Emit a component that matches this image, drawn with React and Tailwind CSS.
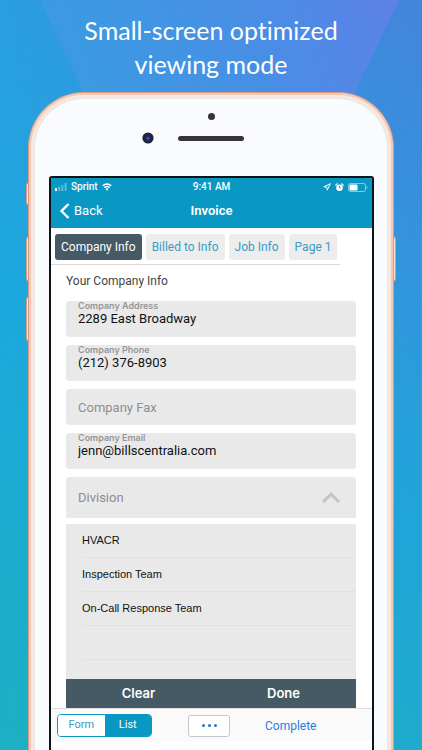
import React, { useState } from 'react';

const TABS = ['Company Info', 'Billed to Info', 'Job Info', 'Page 1'];
const DIVISIONS = ['HVACR', 'Inspection Team', 'On-Call Response Team'];

const Field = ({ id, label, type = 'text', defaultValue }) => (
    <div className="flex h-9 flex-col rounded-[3px] bg-[#e9e9e9] px-3">
        <label htmlFor={id} className="font-['Inter',sans-serif] text-[9px] leading-[10px] font-semibold text-[#969696]">{label}</label>
        <input
            id={id}
            type={type}
            defaultValue={defaultValue}
            className="w-full bg-transparent text-[13px] leading-4 text-[#111] outline-none"
        />
    </div>
);

const Backdrop = () => (
    <svg className="absolute inset-0 h-full w-full" viewBox="0 0 422 750" preserveAspectRatio="none" aria-hidden="true">
        <defs>
            <linearGradient id="west" x1="0" y1="0" x2="0" y2="1">
                <stop offset="0" stopColor="#2b9ee0" />
                <stop offset="0.4" stopColor="#1ba9de" />
                <stop offset="1" stopColor="#1db1c3" />
            </linearGradient>
            <linearGradient id="east" x1="0" y1="0" x2="0" y2="1">
                <stop offset="0" stopColor="#4484dc" />
                <stop offset="0.35" stopColor="#3494dc" />
                <stop offset="0.65" stopColor="#21a3da" />
                <stop offset="1" stopColor="#1eabcd" />
            </linearGradient>
            <linearGradient id="fade" x1="0" y1="0" x2="1" y2="0">
                <stop offset="0" stopColor="#000" />
                <stop offset="1" stopColor="#fff" />
            </linearGradient>
            <mask id="blend">
                <rect width="422" height="750" fill="url(#fade)" />
            </mask>
            <linearGradient id="beam" gradientUnits="userSpaceOnUse" x1="400" y1="0" x2="70" y2="110">
                <stop offset="0" stopColor="#5d80e8" />
                <stop offset="0.45" stopColor="#478fe5" />
                <stop offset="1" stopColor="#3b9be2" />
            </linearGradient>
        </defs>
        <rect width="422" height="750" fill="url(#west)" />
        <rect width="422" height="750" fill="url(#east)" mask="url(#blend)" />
        <path d="M40 0H399L340 124H98Z" fill="url(#beam)" />
    </svg>
);

const StatusBar = () => (
    <div className="grid grid-cols-3 items-center px-1 pt-[3px] text-[10px] leading-3 font-medium">
        <div className="flex items-center gap-1">
            <svg width="12" height="8" viewBox="0 0 12 8" fill="#fff" aria-hidden="true">
                <rect y="5" width="2" height="3" rx=".6" />
                <rect x="3.2" y="3.5" width="2" height="4.5" rx=".6" opacity=".35" />
                <rect x="6.4" y="2" width="2" height="6" rx=".6" opacity=".35" />
                <rect x="9.6" width="2" height="8" rx=".6" opacity=".35" />
            </svg>
            <span>Sprint</span>
            <svg width="10" height="8" viewBox="0 0 10 8" aria-hidden="true">
                <path d="M.7 2.8Q5-.9 9.3 2.8M2.4 4.6Q5 2.4 7.6 4.6" fill="none" stroke="#fff" strokeWidth="1.5" />
                <path d="M3.4 5.8Q5 4.7 6.6 5.8L5 7.7Z" fill="#fff" />
            </svg>
        </div>
        <div className="text-center">9:41 AM</div>
        <div className="flex items-center justify-end gap-1">
            <svg width="8" height="8" viewBox="0 0 8 8" fill="none" stroke="#fff" strokeWidth="1" strokeLinejoin="round" aria-hidden="true">
                <path d="M7.3.7.8 3.8l3 .4.4 3Z" />
            </svg>
            <svg width="9" height="9" viewBox="0 0 9 9" aria-hidden="true">
                <circle cx="4.5" cy="4.8" r="3.3" fill="#fff" />
                <path d="M.8 2.2 2.3.8M8.2 2.2 6.7.8" stroke="#fff" strokeWidth="1.2" strokeLinecap="round" />
                <path d="M4.5 2.9v2.1h1.5" fill="none" stroke="#0998c4" strokeWidth=".8" />
            </svg>
            <svg width="20" height="9" viewBox="0 0 20 9" aria-hidden="true">
                <rect x=".5" y=".5" width="17" height="8" rx="2" fill="none" stroke="#fff" strokeOpacity=".5" />
                <rect x="1.5" y="1.5" width="8" height="6" rx="1" fill="#fff" />
                <path d="M18.6 3v3c1-.3 1-2.7 0-3Z" fill="#fff" fillOpacity=".6" />
            </svg>
        </div>
    </div>
);

const InvoiceScreen = () => {
    const [tab, setTab] = useState('Company Info');
    const [open, setOpen] = useState(true);
    const [mode, setMode] = useState('List');

    return (
        <div className="-mr-px flex flex-1 flex-col overflow-hidden rounded-t-[3px] border-2 border-b-0 border-[#0b1418] bg-white">
            <header className="h-[50px] bg-[#0998c4] text-white">
                <StatusBar />
                <div className="grid grid-cols-3 items-center px-2 pt-2">
                    <button type="button" className="flex items-center gap-1 text-[13px] leading-5">
                        <svg width="11" height="16" viewBox="0 0 11 16" fill="none" stroke="#fff" strokeWidth="2.4" aria-hidden="true">
                            <path d="M9.5 1 2.5 8l7 7" />
                        </svg>
                        Back
                    </button>
                    <h2 className="text-center text-[13px] leading-5 font-semibold">Invoice</h2>
                </div>
            </header>

            <nav className="mr-8 flex gap-1 border-b border-[#d9d9d9] px-1 pt-1.5 pb-1">
                {TABS.map((name) => (
                    <button
                        key={name}
                        type="button"
                        onClick={() => setTab(name)}
                        className={`h-[26px] rounded-[3px] px-1.5 text-[12px] whitespace-nowrap ${tab === name ? 'bg-[#455a64] text-white' : 'bg-[#ededed] text-[#3a9cc4]'}`}
                    >
                        {name}
                    </button>
                ))}
            </nav>

            <form className="pr-4 pl-[15px]" onSubmit={(e) => e.preventDefault()}>
                <h3 className="pt-1.5 pb-2.5 text-[12px] leading-5 text-[#444]">Your Company Info</h3>

                <div className="flex flex-col gap-2">
                    <Field id="address" label="Company Address" defaultValue="2289 East Broadway" />
                    <Field id="phone" label="Company Phone" type="tel" defaultValue="(212) 376-8903" />
                    <input
                        aria-label="Company Fax"
                        placeholder="Company Fax"
                        className="h-9 rounded-[3px] bg-[#e9e9e9] px-3 text-[13px] outline-none placeholder:text-[#8e8e8e]"
                    />
                    <Field id="email" label="Company Email" type="email" defaultValue="jenn@billscentralia.com" />
                    <button
                        type="button"
                        aria-expanded={open}
                        onClick={() => setOpen(!open)}
                        className="flex h-[41px] items-center justify-between rounded-t-[3px] bg-[#e9e9e9] pr-4 pl-3 text-[13px] text-[#8e8e8e]"
                    >
                        Division
                        <svg className={open ? '' : 'rotate-180'} width="18" height="11" viewBox="0 0 18 11" fill="none" stroke="#c4c4c4" strokeWidth="3" aria-hidden="true">
                            <path d="M1 10 9 2.2 17 10" />
                        </svg>
                    </button>
                </div>

                {open && (
                    <div className="mt-1.5">
                        <ul className="h-[155px] overflow-hidden bg-[#e9e9e9] pl-4 font-['Liberation_Sans',sans-serif] text-[11px]">
                            {DIVISIONS.map((name) => (
                                <li key={name} className="border-b border-[#dfe2e4]">
                                    <button type="button" className="h-[33px] w-full text-left text-[#111]">{name}</button>
                                </li>
                            ))}
                            <li className="h-[34px] border-b border-[#dfe2e4]" />
                        </ul>
                        <div className="grid h-[29px] grid-cols-2 bg-[#455a64] font-['Inter',sans-serif] text-[13px] font-semibold text-white">
                            <button type="button">Clear</button>
                            <button type="button">Done</button>
                        </div>
                    </div>
                )}
            </form>

            <footer className="flex items-center border-t border-[#dedede] bg-[#fafafa] px-1.5 py-[5px]">
                <div className="flex h-[23px] w-[95px] overflow-hidden rounded-[4px] border border-[#0998c4] text-[11px]">
                    {['Form', 'List'].map((name) => (
                        <button
                            key={name}
                            type="button"
                            onClick={() => setMode(name)}
                            className={`flex-1 ${mode === name ? 'bg-[#0998c4] text-white' : 'bg-white text-[#3a9cc4]'}`}
                        >
                            {name}
                        </button>
                    ))}
                </div>
                <button type="button" aria-label="More" className="ml-9 flex h-[22px] w-[42px] items-center justify-center gap-[3px] rounded-[3px] border border-[#c3c6cf] bg-white">
                    <span className="size-[3px] rounded-full bg-[#1f74dc]" />
                    <span className="size-[3px] rounded-full bg-[#1f74dc]" />
                    <span className="size-[3px] rounded-full bg-[#1f74dc]" />
                </button>
                <button type="button" className="ml-[35px] text-[12px] text-[#2a7bdd]">Complete</button>
            </footer>
        </div>
    );
};

const Phone = () => (
    <div className="relative flex flex-1 flex-col">
        {/* side buttons */}
        <div className="absolute top-[90px] -left-0.5 h-6 w-1 rounded-l-sm border border-[#d49c84] bg-[#fbe3d8]" />
        <div className="absolute top-36 -left-0.5 h-[46px] w-1 rounded-l-sm border border-[#d49c84] bg-[#fbe3d8]" />
        <div className="absolute top-[204px] -left-0.5 h-[46px] w-1 rounded-l-sm border border-[#d49c84] bg-[#fbe3d8]" />
        <div className="absolute top-36 -right-0.5 h-[46px] w-1 rounded-r-sm border border-[#d49c84] bg-[#fbe3d8]" />

        {/* metal rim, from the outer edge to the glass */}
        <div className="relative flex flex-1 flex-col rounded-t-[56px] border border-b-0 border-[#d39c84] bg-[#f3c9b5]">
            <div className="flex flex-1 flex-col rounded-t-[55px] border-2 border-b-0 border-[#f3c9b5] bg-[#f9e6de]">
                <div className="flex flex-1 flex-col rounded-t-[53px] border-3 border-b-0 border-[#f9e6de] bg-[#e6e8ee]">
                    <div className="flex flex-1 flex-col rounded-t-[50px] border border-b-0 border-[#e6e8ee] bg-[#fafbfd] px-3.5">
                        <div className="flex h-[77px] flex-col items-center pt-3.5">
                            <span className="size-[7px] rounded-full bg-[#38343a]" />
                            <div className="mt-3 grid w-full grid-cols-[1fr_66px_1fr] items-center">
                                <svg className="mr-6 justify-self-end" width="12" height="12" viewBox="0 0 12 12" aria-hidden="true">
                                    <circle cx="6" cy="6" r="5.6" fill="#25252f" />
                                    <circle cx="6" cy="6" r="3.4" fill="#1a2763" />
                                    <circle cx="6" cy="6.3" r="1.5" fill="#3a55b0" />
                                </svg>
                                <span className="h-[5px] rounded-full bg-[#38343a]" />
                            </div>
                        </div>
                        <InvoiceScreen />
                    </div>
                </div>
            </div>
        </div>
    </div>
);

const App = () => (
    <main className="relative flex min-h-screen flex-col overflow-hidden font-['Roboto',sans-serif]">
        <Backdrop />
        <div className="relative flex flex-1 flex-col px-7">
            <h1 className="flex h-[92px] flex-col pt-[13px] text-center font-['Lato',sans-serif] text-[25px] leading-[34px] text-white [font-variant-ligatures:none]">
                <span>Small-screen optimized</span>
                <span>viewing mode</span>
            </h1>
            <Phone />
        </div>
    </main>
);

export default App;
